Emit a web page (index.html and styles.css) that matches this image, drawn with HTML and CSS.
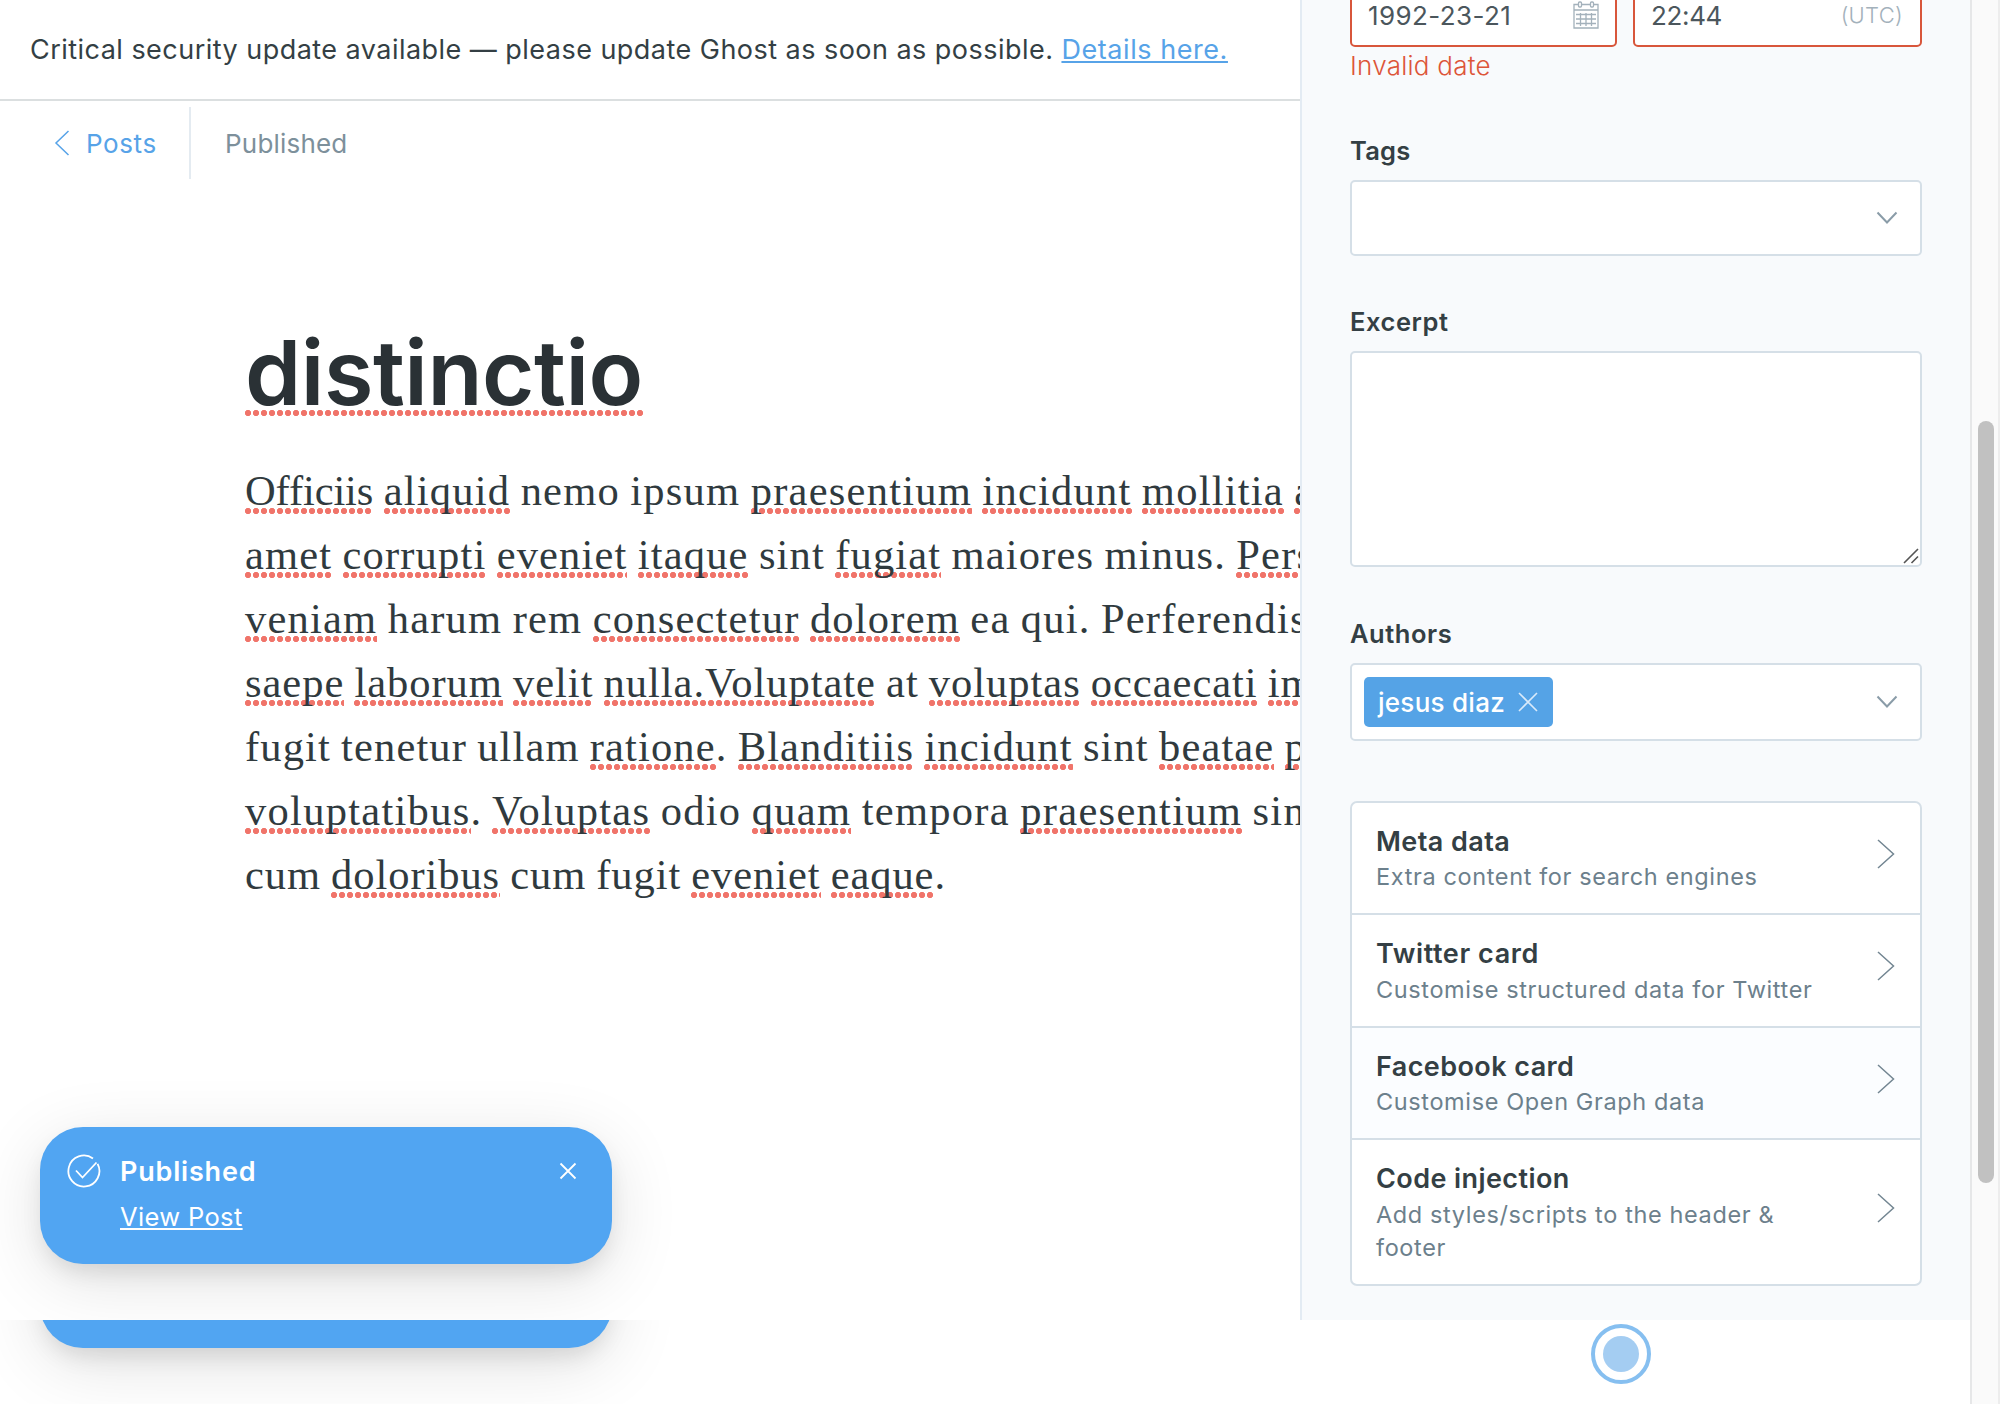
FILE: index.html
```html
<!DOCTYPE html>
<html lang="en">
<head>
<meta charset="utf-8">
<title>Editor</title>
<link rel="stylesheet" href="styles.css">
</head>
<body>
<div class="window">
  <div class="page">
    <div class="viewport">
      <main class="main">
        <div class="banner"><p>Critical security update available — please update Ghost as soon as possible. <a class="banner-link">Details here.</a></p></div>
        <header class="nav">
          <a class="back"><svg width="16" height="26" viewBox="0 0 16 26"><path d="M14.500 1 2 13l12.500 12"/></svg><span>Posts</span></a>
          <span class="status">Published</span>
        </header>
        <article class="post">
          <h1><span class="title-misspelled">distinctio</span></h1>
          <div class="copy">
            <p class="l1"><i class="ligature">Officiis</i> <i>aliquid</i> nemo ipsum <i>praesentium</i> <i>incidunt</i> <i>mollitia</i> <i>a</i></p>
            <p class="l2"><i>amet</i> <i>corrupti</i> <i>eveniet</i> <i>itaque</i> sint <i>fugiat</i> maiores minus. <i>Pers</i></p>
            <p class="l3"><i>veniam</i> harum rem <i>consectetur</i> <i>dolorem</i> ea qui. Perferendis</p>
            <p class="l4"><i>saepe</i> <i>laborum</i> <i>velit</i> <i>nulla.Voluptate</i> at <i>voluptas</i> <i>occaecati</i> <i>im</i></p>
            <p class="l5">fugit tenetur ullam <i>ratione</i>. <i>Blanditiis</i> <i>incidunt</i> sint <i>beatae</i> <i>p</i></p>
            <p class="l6"><i>voluptatibus</i>. <i>Voluptas</i> odio <i>quam</i> tempora <i>praesentium</i> sin</p>
            <p class="l7">cum <i>doloribus</i> cum fugit <i>eveniet</i> <i>eaque</i>.</p>
          </div>
        </article>
      </main>
      <aside class="settings">
        <div class="date-row">
          <div class="input date"><span>1992-23-21</span>
            <svg class="calendar" width="26" height="28" viewBox="0 0 26 28"><path d="M1 3.500h24v23.500H1zM1 9h24M3 13.500h20M3 18h20M3 22.500h20M7.500 12v13M13 12v13M18.500 12v13"/><rect x="5.500" y="1" width="3" height="5" rx="1" fill="#fff"/><rect x="17.500" y="1" width="3" height="5" rx="1" fill="#fff"/></svg>
          </div>
          <div class="input time"><span>22:44</span><small>(UTC)</small></div>
        </div>
        <p class="error">Invalid date</p>
        <label>Tags</label>
        <div class="box select"><svg class="caret" width="22" height="14" viewBox="0 0 22 14"><path d="m1.500 1.500 9.500 10 9.500-10"/></svg></div>
        <label>Excerpt</label>
        <div class="box excerpt"><svg width="16" height="16" viewBox="0 0 16 16"><path d="M1 15 15 1M8.500 15 15 8.500"/></svg></div>
        <label class="authors-label">Authors</label>
        <div class="box select authors">
          <span class="chip"><span>jesus diaz</span><svg width="20" height="20" viewBox="0 0 20 20"><path d="m1 1 18 18M19 1 1 19"/></svg></span>
          <svg class="caret" width="22" height="14" viewBox="0 0 22 14"><path d="m1.500 1.500 9.500 10 9.500-10"/></svg>
        </div>
        <ul class="cards">
          <li><div><h2>Meta data</h2><p>Extra content for search engines</p></div><svg width="18" height="30" viewBox="0 0 18 30"><path d="m1 1 15.500 14L1 29"/></svg></li>
          <li class="tall"><div><h2 class="twitter">Twitter card</h2><p>Customise structured data for Twitter</p></div><svg width="18" height="30" viewBox="0 0 18 30"><path d="m1 1 15.500 14L1 29"/></svg></li>
          <li class="hover"><div><h2>Facebook card</h2><p>Customise Open Graph data</p></div><svg width="18" height="30" viewBox="0 0 18 30"><path d="m1 1 15.500 14L1 29"/></svg></li>
          <li class="tall"><div><h2>Code injection</h2><p>Add styles/scripts to the header &amp; footer</p></div><svg width="18" height="30" viewBox="0 0 18 30"><path d="m1 1 15.500 14L1 29"/></svg></li>
        </ul>
      </aside>
      <div class="toast">
        <svg class="check" width="34" height="34" viewBox="0 0 34 34"><path d="M26 4.500A15.500 15.500 0 1 0 30.600 9.800M9 16.500l6.500 7 14-15"/></svg>
        <div class="toast-text"><strong>Published</strong><a>View Post</a></div>
        <svg class="close" width="18" height="18" viewBox="0 0 18 18"><path d="m1.500 1.500 15 15M16.500 1.500l-15 15"/></svg>
      </div>
    </div>
    <div class="overflow">
      <div class="toast toast-under"></div>
      <svg class="spinner" width="60" height="60" viewBox="0 0 60 60"><circle class="ring" cx="30" cy="30" r="28"/><circle class="dot" cx="30" cy="30" r="18"/></svg>
    </div>
  </div>
  <div class="scrollbar"><div class="thumb"></div></div>
</div>
</body>
</html>
```
FILE: styles.css
```css
* { box-sizing: border-box; }
body { margin: 0; background: #fff; color: #343f44; font-family: Inter, "Liberation Sans", sans-serif; }
h1, h2, p, ul { margin: 0; padding: 0; }
svg { display: block; fill: none; flex: none; }
.window { display: flex; width: 2000px; height: 1404px; overflow: hidden; }
.page { width: 1970px; }
.viewport { position: relative; display: flex; height: 1320px; overflow: hidden; }

/* Editor */
.main { width: 1300px; overflow: hidden; }
.banner { display: flex; align-items: center; height: 101px; padding-left: 30px; border-bottom: 2px solid #dbdfe0; font-size: 27px; letter-spacing: .465px; white-space: nowrap; }
.banner-link { color: #57a3e8; letter-spacing: .56px; text-decoration: underline; text-decoration-thickness: 2px; text-underline-offset: 2px; }
.nav { display: flex; align-items: center; height: 72px; margin-top: 6px; font-size: 26px; }
.back { display: flex; align-items: center; gap: 16px; width: 191px; height: 72px; padding-left: 54px; border-right: 2px solid #e4ebf1; color: #57a3e8; letter-spacing: .6px; }
.back svg { stroke: #57a3e8; stroke-width: 1.5; }
.status { margin: 1px 0 0 34px; color: #7d909b; letter-spacing: .2px; }
.post { width: 1055px; margin: 142px 0 0 245px; }
h1 { font-size: 90px; font-weight: 600; line-height: 104px; letter-spacing: -.41px; color: #2a3135; }
.copy { margin-top: 34px; font: 42.500px/64px "Liberation Serif", serif; color: #303a3e; word-spacing: -1.500px; white-space: nowrap; }
.copy i, .title-misspelled { font-style: normal; background: radial-gradient(circle at 3px 3px, #f0746a 2.8px, transparent 3.4px) 0 100% / 8px 6px repeat-x; }
.title-misspelled { background-position: 0 calc(100% - 11px); }
.l1 { letter-spacing: 1.23px; }
.l1 .ligature { letter-spacing: -.1px; }
.l2 { letter-spacing: 1.16px; }
.l3 { letter-spacing: 1.21px; }
.l4 { letter-spacing: .98px; }
.l5 { letter-spacing: 1.12px; }
.l6 { letter-spacing: 1.28px; }
.l7 { letter-spacing: .94px; }

/* Settings panel */
.settings { width: 670px; height: 1320px; padding: 0 48px; border-left: 2px solid #e3ebf3; background: #f8fafc; }
.date-row { display: flex; gap: 16px; margin-top: -17px; }
.input { display: flex; align-items: center; justify-content: space-between; height: 64px; border: 2px solid #d8563b; border-radius: 5px; background: #fff; color: #4b565c; font-size: 26px; }
.date { width: 267px; padding: 0 16px; letter-spacing: .4px; }
.time { width: 289px; padding: 0 17px 0 16px; letter-spacing: -.35px; }
.time small { font-size: 22px; font-weight: 300; letter-spacing: .3px; color: #a3b1bb; }
.calendar { stroke: #a3b1bb; stroke-width: 1.3; }
.error { font-size: 26px; font-weight: 300; line-height: 37px; letter-spacing: .25px; color: #dd5538; }
label { display: block; margin: 51px 0 14px; font-size: 25.500px; font-weight: 600; line-height: 30px; letter-spacing: .55px; }
.error + label { margin-top: 52px; letter-spacing: .2px; }
.authors-label { margin-top: 52px; }
.box { border: 2px solid #d5dfe7; border-radius: 5px; background: #fff; }
.select { display: flex; align-items: center; justify-content: flex-end; height: 76px; padding-right: 22px; }
.caret { stroke: #8a9ca8; stroke-width: 2; }
.excerpt { display: flex; align-items: flex-end; justify-content: flex-end; height: 216px; padding: 1px; }
.excerpt svg { stroke: #555; stroke-width: 1.6; }
.authors { height: 78px; justify-content: space-between; padding-left: 12px; }
.chip { display: flex; align-items: center; gap: 13px; width: 189px; height: 50px; padding-left: 14px; border-radius: 5px; background: #55a3e6; color: #fff; font-size: 26px; font-weight: 500; letter-spacing: .27px; }
.chip svg { stroke: #d9eafa; stroke-width: 1.6; }
.cards { margin-top: 60px; border: 2px solid #d5dfe7; border-radius: 7px; background: #fff; list-style: none; overflow: hidden; }
.cards li { display: flex; justify-content: space-between; align-items: center; min-height: 112px; padding: 0 25px 0 24px; border-bottom: 2px solid #d5dfe7; }
.cards li.tall { min-height: 113px; }
.cards li.tall p { margin-top: 3px; }
.cards li.hover { background: #fbfdff; }
.cards li:last-child { min-height: 144px; border-bottom: 0; }
.cards div { align-self: flex-start; width: 460px; padding-top: 22px; }
.cards h2 { font-size: 27px; font-weight: 600; line-height: 33px; letter-spacing: .42px; }
.cards h2.twitter { letter-spacing: .6px; }
.cards p { margin-top: 2px; font-size: 23.500px; line-height: 33px; letter-spacing: .62px; color: #6c808c; }
.cards svg { margin-bottom: 9px; stroke: #738692; stroke-width: 1.5; }

/* Notifications */
.toast { position: absolute; left: 40px; top: 1127px; display: flex; width: 572px; height: 137px; padding: 25px 35px 0 27px; border-radius: 43px; background: #51a5f2; color: #fff; box-shadow: 0 12px 24px -6px rgba(0,0,0,.12), 0 16px 70px rgba(0,0,0,.12); }
.toast svg { stroke: #fff; stroke-width: 1.8; }
.check { margin-top: 2px; }
.close { margin: 10px 0 0 auto; }
.toast-text { margin-left: 19px; }
.toast-text strong, .toast-text a { display: block; line-height: 40px; }
.toast-text strong { font-size: 27px; font-weight: 600; letter-spacing: .8px; }
.toast-text a { margin-top: 5px; font-size: 25.500px; letter-spacing: .35px; text-decoration: underline; text-decoration-thickness: 2px; text-underline-offset: 2px; }
.overflow { position: relative; height: 84px; overflow: hidden; }
.toast-under { top: -109px; }
.spinner { position: relative; margin: 4px 0 0 1591px; }
.ring { stroke: #86bff0; stroke-width: 4; }
.dot { fill: #a4cdf2; }

.scrollbar { width: 30px; height: 1404px; padding: 421px 4px 0 6px; border-left: 2px solid #e6e7e8; border-right: 2px solid #ededed; background: #fafafa; }
.thumb { width: 16px; height: 762px; border-radius: 8px; background: #c1c1c1; }
```
